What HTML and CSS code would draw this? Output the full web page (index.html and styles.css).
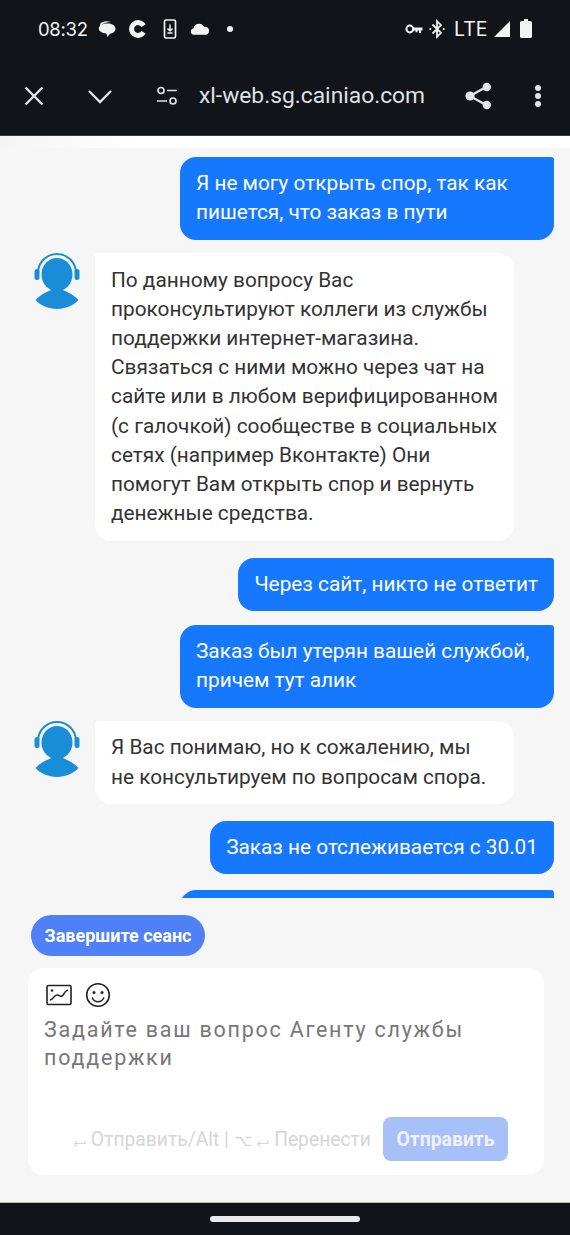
FILE: index.html
```html
<!DOCTYPE html>
<html lang="ru">
<head>
    <meta charset="UTF-8">
    <meta name="viewport" content="width=device-width, initial-scale=1.0">
    <title>xl-web.sg.cainiao.com</title>
    <link rel="stylesheet" href="styles.css">
</head>
<body>
    <header class="top">
        <div class="status">
            <span class="time">08:32</span>
            <svg class="st-chat" width="18" height="18" viewBox="0 0 18 18"><path d="M2 4C4 .8 9.500 .6 13 2 9.500 2 4 3 2 7z" fill="#e8eaed"/><path d="M9.500 3.500c4.500 0 8 2 8 5.200 0 2.800-2.800 4.800-5.500 5L9.500 17 8.300 13.600C4 13 .8 11.300 .8 8.500.8 5.500 5 3.500 9.500 3.500z" fill="#f1f3f4"/></svg>
            <svg class="st-c" width="19" height="18" viewBox="0 0 19 18"><path d="M15.500 12.300A6.400 6.400 0 1 1 15.500 5.700" fill="none" stroke="#f1f3f4" stroke-width="5"/></svg>
            <svg class="st-phone" width="14" height="20" viewBox="0 0 14 20"><rect x="1.500" y="1" width="11" height="18" rx="1.500" fill="none" stroke="#f1f3f4" stroke-width="1.700"/><path d="M7 5.500v6M4.500 9.500 7 12l2.500-2.500M4.500 14h5" fill="none" stroke="#f1f3f4" stroke-width="1.500"/></svg>
            <svg class="st-cloud" width="20" height="14" viewBox="0 0 20 14"><path d="M3.800 12.800a3.300 3.300 0 0 1-.3-6.500 5.600 5.600 0 0 1 10.500-1.500 4 4 0 0 1 2 8z" fill="#f1f3f4"/></svg>
            <span class="st-dot"></span>
            <span class="st-space"></span>
            <svg class="st-key" width="18" height="12" viewBox="0 0 18 12"><circle cx="4.800" cy="6" r="3.400" fill="none" stroke="#f1f3f4" stroke-width="2"/><path d="M8 4.500h9.500v3h-1.500v2.500h-2V7.500h-1.500v1.800h-2V7.500H8z" fill="#f1f3f4"/></svg>
            <svg class="st-bt" width="16" height="20" viewBox="0 0 16 20"><path d="M3.500 5.500 12 13.800 8 17.800V2.200l4 4L3.500 14.500" fill="none" stroke="#f1f3f4" stroke-width="1.800"/><circle cx="1.300" cy="10" r="1.100" fill="#f1f3f4"/><circle cx="14.700" cy="10" r="1.100" fill="#f1f3f4"/></svg>
            <span class="lte">LTE</span>
            <svg class="st-signal" width="18" height="18" viewBox="0 0 18 18"><path d="M17 1v16H1z" fill="#f1f3f4"/></svg>
            <svg class="st-battery" width="12" height="19" viewBox="0 0 12 19"><path d="M4 0h4v2h2.500A1.500 1.500 0 0 1 12 3.500v14a1.500 1.500 0 0 1-1.500 1.500h-9A1.500 1.500 0 0 1 0 17.500v-14A1.500 1.500 0 0 1 1.500 2H4z" fill="#f1f3f4"/></svg>
        </div>
        <div class="toolbar">
            <svg class="tb-close" width="22" height="22" viewBox="0 0 22 22"><path d="M2.500 2.500l17 17M19.500 2.500l-17 17" stroke="#e3e5e8" stroke-width="2.400" fill="none"/></svg>
            <svg class="tb-down" width="26" height="16" viewBox="0 0 26 16"><path d="M2 3l11 11L24 3" stroke="#e3e5e8" stroke-width="2.400" fill="none"/></svg>
            <svg class="tb-tune" width="22" height="20" viewBox="0 0 22 20"><circle cx="5" cy="4.500" r="3" fill="none" stroke="#dfe1e5" stroke-width="1.700"/><path d="M11 4.500h10M1 15h10" stroke="#dfe1e5" stroke-width="1.700"/><circle cx="17" cy="15" r="3" fill="none" stroke="#dfe1e5" stroke-width="1.700"/></svg>
            <span class="url">xl-web.sg.cainiao.com</span>
            <svg class="tb-share" width="27" height="28" viewBox="0 0 27 28"><path d="M21 5 5 14l16 9" fill="none" stroke="#e3e5e8" stroke-width="2.200"/><circle cx="21.800" cy="5" r="4.200" fill="#e3e5e8"/><circle cx="5" cy="14" r="4.600" fill="#e3e5e8"/><circle cx="21.800" cy="23" r="4.200" fill="#e3e5e8"/></svg>
            <svg class="tb-more" width="8" height="24" viewBox="0 0 8 24"><circle cx="4" cy="4" r="3" fill="#e3e5e8"/><circle cx="4" cy="12" r="3" fill="#e3e5e8"/><circle cx="4" cy="20" r="3" fill="#e3e5e8"/></svg>
        </div>
    </header>

    <div class="page-top"></div>

    <main class="chat">
        <div class="msg user wide">Я не могу открыть спор, так как<br>пишется, что заказ в пути</div>
        <div class="row">
            <svg class="avatar" width="46" height="56" viewBox="0 0 46 56"><path d="M4 24V20a19 19 0 0 1 38 0v4" fill="none" stroke="#1a8dd8" stroke-width="2"/><rect x="0.500" y="16" width="5" height="11" rx="2.500" fill="#1a8dd8"/><rect x="40.500" y="16" width="5" height="11" rx="2.500" fill="#1a8dd8"/><ellipse cx="23" cy="21.500" rx="15.500" ry="16.500" fill="#1a8dd8"/><path d="M1.500 47C7 41 13 39 17 37h12c4 2 10 4 15.500 10-5 5.500-13 9-21.500 9S6.500 52.500 1.500 47z" fill="#1a8dd8"/></svg>
            <div class="msg bot">По данному вопросу Вас<br>проконсультируют коллеги из службы<br>поддержки интернет-магазина.<br>Связаться с ними можно через чат на<br>сайте или в любом верифицированном<br>(с галочкой) сообществе в социальных<br>сетях (например Вконтакте) Они<br>помогут Вам открыть спор и вернуть<br>денежные средства.</div>
        </div>
        <div class="msg user">Через сайт, никто не ответит</div>
        <div class="msg user wide">Заказ был утерян вашей службой,<br>причем тут алик</div>
        <div class="row">
            <svg class="avatar" width="46" height="56" viewBox="0 0 46 56"><path d="M4 24V20a19 19 0 0 1 38 0v4" fill="none" stroke="#1a8dd8" stroke-width="2"/><rect x="0.500" y="16" width="5" height="11" rx="2.500" fill="#1a8dd8"/><rect x="40.500" y="16" width="5" height="11" rx="2.500" fill="#1a8dd8"/><ellipse cx="23" cy="21.500" rx="15.500" ry="16.500" fill="#1a8dd8"/><path d="M1.500 47C7 41 13 39 17 37h12c4 2 10 4 15.500 10-5 5.500-13 9-21.500 9S6.500 52.500 1.500 47z" fill="#1a8dd8"/></svg>
            <div class="msg bot">Я Вас понимаю, но к сожалению, мы<br>не консультируем по вопросам спора.</div>
        </div>
        <div class="msg user">Заказ не отслеживается с 30.01</div>
        <div class="msg user wide clipped"></div>
    </main>

    <section class="bottom">
        <button class="end-btn">Завершите сеанс</button>
        <div class="composer">
            <div class="tools">
                <svg width="26" height="22" viewBox="0 0 26 22"><rect x="1" y="1.500" width="24" height="19" rx="1.500" fill="none" stroke="#222" stroke-width="1.600"/><path d="M4 16c3 0 4-5 7-5s3 2 5 1 2-5 6-6" fill="none" stroke="#222" stroke-width="1.500"/><circle cx="6" cy="6.500" r="1.300" fill="#222"/></svg>
                <svg width="26" height="26" viewBox="0 0 26 26"><circle cx="13" cy="13" r="11.300" fill="none" stroke="#222" stroke-width="1.600"/><circle cx="9" cy="10.500" r="1.500" fill="#222"/><circle cx="17" cy="10.500" r="1.500" fill="#222"/><path d="M7 15.500c1.500 3 3.500 4.300 6 4.300s4.500-1.300 6-4.300" fill="none" stroke="#222" stroke-width="1.600"/></svg>
            </div>
            <p class="placeholder">Задайте ваш вопрос Агенту службы поддержки</p>
            <div class="send-row">
                <span class="hint">
                    <svg class="enter" width="13" height="9" viewBox="0 0 13 9"><path d="M12 1.500v3H2M4 2.500 1.500 5 4 7.500" fill="none" stroke="#d6d6d6" stroke-width="1.200"/></svg>
                    Отправить/Alt | <span class="opt">⌥</span>
                    <svg class="enter" width="13" height="9" viewBox="0 0 13 9"><path d="M12 1.500v3H2M4 2.500 1.500 5 4 7.500" fill="none" stroke="#d6d6d6" stroke-width="1.200"/></svg>
                    Перенести
                </span>
                <button class="send-btn">Отправить</button>
            </div>
        </div>
    </section>

    <footer class="nav"><span class="home-pill"></span></footer>
</body>
</html>
```

FILE: styles.css
```css
* {
    box-sizing: border-box;
}
html, body {
    margin: 0;
    height: 1235px;
    overflow: hidden;
}
body {
    width: 570px;
    font-family: Roboto, Arial, sans-serif;
    background-color: #f6f6f7;
    display: flex;
    flex-direction: column;
}
svg {
    flex: none;
}
.top {
    height: 136px;
    flex: none;
    background-color: #111418;
    border-bottom: 1px solid #3a3d40;
}
.status {
    height: 56px;
    padding: 1px 38px 0 38px;
    display: flex;
    align-items: center;
    color: #f1f3f4;
}
.time {
    font-size: 18.500px;
    font-family: Inter, Roboto, sans-serif;
    letter-spacing: -0.300px;
    width: 60px;
}
.st-c {
    margin-left: 12px;
}
.st-phone {
    margin-left: 16px;
}
.st-cloud {
    margin-left: 13px;
}
.st-dot {
    width: 6px;
    height: 6px;
    border-radius: 50%;
    background-color: #f1f3f4;
    margin-left: 17px;
}
.st-space {
    flex: 1;
}
.st-bt {
    margin-left: 6px;
}
.lte {
    font-size: 19.500px;
    font-family: Inter, Roboto, sans-serif;
    margin-left: 9px;
    width: 34px;
}
.st-signal {
    margin-left: 5px;
}
.st-battery {
    margin-left: 9px;
}
.toolbar {
    height: 79px;
    display: flex;
    align-items: center;
    padding: 0 28px 0 23px;
}
.tb-down {
    margin-left: 42px;
}
.tb-tune {
    margin-left: 43px;
}
.url {
    font-size: 22.800px;
    color: #dfe1e5;
    margin-left: 21px;
    flex: 1;
}
.tb-more {
    margin-left: 42px;
}
.page-top {
    height: 12px;
    flex: none;
    background: linear-gradient(90deg, #f4f4f4, #fff 25%);
}
.chat {
    height: 750px;
    flex: none;
    overflow: hidden;
    padding: 9px 16px 0 34px;
    display: flex;
    flex-direction: column;
    align-items: flex-end;
}
.msg {
    font-size: 20.800px;
    line-height: 29.200px;
    padding: 12.200px 16px;
    border-radius: 16px;
    flex: none;
}
.user {
    background-color: #1677ff;
    color: #fff;
    border-top-right-radius: 3px;
    margin-bottom: 13.600px;
}
.wide {
    width: 374px;
}
.clipped {
    height: 54px;
    margin-top: 1.600px;
}
.row {
    align-self: stretch;
    display: flex;
    align-items: flex-start;
    gap: 15px;
    margin-bottom: 17px;
    flex: none;
}
.bot {
    background-color: #fff;
    color: #333;
    border-top-left-radius: 3px;
    width: 419px;
}
.bottom {
    flex: none;
    height: 304px;
    padding: 17px 26px 0 28px;
    display: flex;
    flex-direction: column;
    align-items: flex-start;
}
.end-btn {
    height: 41px;
    width: 174px;
    margin-left: 3px;
    border: none;
    border-radius: 21px;
    background-color: #5080f5;
    color: #fff;
    font-family: Roboto, Arial, sans-serif;
    font-size: 18px;
    font-weight: 700;
    padding: 0;
}
.composer {
    margin-top: 12px;
    width: 516px;
    height: 207px;
    background-color: #fff;
    border-radius: 16px;
    padding: 14px 36px 14px 16px;
    display: flex;
    flex-direction: column;
}
.tools {
    display: flex;
    align-items: center;
    gap: 13px;
    height: 26px;
    padding-left: 2px;
}
.placeholder {
    margin: 8px 0 0;
    font-size: 21.500px;
    line-height: 28px;
    letter-spacing: 1.750px;
    color: #777;
    height: 56px;
}
.send-row {
    margin-top: auto;
    display: flex;
    align-items: center;
    justify-content: flex-end;
    gap: 12px;
}
.hint {
    font-size: 19.300px;
    color: #d6d6d6;
    white-space: nowrap;
}
.enter {
    vertical-align: -2px;
}
.opt {
    font-size: 16px;
}
.send-btn {
    width: 125px;
    height: 44px;
    border: none;
    border-radius: 8px;
    background-color: #a8c0f8;
    color: #eef2fd;
    font-family: Roboto, Arial, sans-serif;
    font-size: 19.400px;
    font-weight: 700;
    padding: 0;
}
.nav {
    flex: 1;
    background-color: #111418;
    border-top: 1px solid #b9bcbf;
    display: flex;
    justify-content: center;
    padding-top: 13px;
}
.home-pill {
    width: 150px;
    height: 6px;
    border-radius: 3px;
    background-color: #e8eaed;
}
```
